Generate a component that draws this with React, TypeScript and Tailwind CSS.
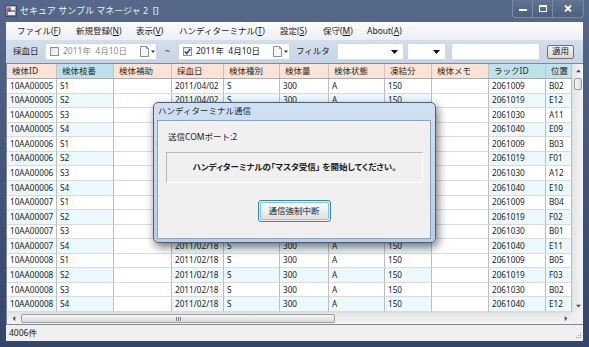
import React from 'react';

type Col = { h: string; w: string; hb: string };
const PEACH = 'bg-[#fbe4d5]';
const BLUE = 'bg-[#bde2ec]';
const cols: Col[] = [
  { h: '検体ID', w: 'w-[50px]', hb: PEACH },
  { h: '検体枝番', w: 'w-[57px]', hb: BLUE },
  { h: '検体補助', w: 'w-[58px]', hb: PEACH },
  { h: '採血日', w: 'w-[52px]', hb: PEACH },
  { h: '検体種別', w: 'w-[56px]', hb: PEACH },
  { h: '検体量', w: 'w-[49px]', hb: PEACH },
  { h: '検体状態', w: 'w-[56px]', hb: PEACH },
  { h: '凍結分', w: 'w-[47px]', hb: PEACH },
  { h: '検体メモ', w: 'w-[57px]', hb: PEACH },
  { h: 'ラックID', w: 'w-[57px]', hb: BLUE },
  { h: '位置', w: 'w-[26px]', hb: BLUE },
];

const racks = [
  ['2061009', 'B02'], ['2061019', 'E12'], ['2061030', 'A11'], ['2061040', 'E09'],
  ['2061009', 'B03'], ['2061019', 'F01'], ['2061030', 'A12'], ['2061040', 'E10'],
  ['2061009', 'B04'], ['2061019', 'F02'], ['2061030', 'B01'], ['2061040', 'E11'],
  ['2061009', 'B05'], ['2061019', 'F03'], ['2061030', 'B02'], ['2061040', 'E12'],
];

const rows = racks.map((r, i) => {
  const n = 5 + Math.floor(i / 4);
  return [
    `10AA0000${n}`,
    `S${(i % 4) + 1}`,
    '',
    n <= 6 ? '2011/04/02' : '2011/02/18',
    'S',
    '300',
    'A',
    '150',
    '',
    r[0],
    r[1],
  ];
});

function U({ c }: { c: string }) {
  return <span className="underline underline-offset-[1px]">{c}</span>;
}

function CalIcon() {
  return (
    <svg width="16" height="11" viewBox="0 0 16 11">
      <path d="M0.5 0.5 H6.5 L8.5 2.5 V10.5 H0.5 Z" fill="#f6f6f6" stroke="#8c8c8c" />
      <path d="M6.5 0.5 V2.5 H8.5" fill="none" stroke="#8c8c8c" />
      <path d="M11 4.5 H15 L13 7 Z" fill="#333" />
    </svg>
  );
}

function DownArrow() {
  return (
    <svg width="7" height="4" viewBox="0 0 7 4">
      <path d="M0 0 H7 L3.5 4 Z" fill="#111" />
    </svg>
  );
}

function Check({ checked }: { checked: boolean }) {
  return (
    <div className="w-[9px] h-[9px] border border-[#8e8f8f] bg-gradient-to-br from-[#e4e4e4] to-[#fbfbfb] flex items-center justify-center">
      {checked && (
        <svg width="7" height="7" viewBox="0 0 7 7">
          <path d="M0.8 3.6 L2.7 5.6 L6.3 1" fill="none" stroke="#2a3b63" strokeWidth="1.4" />
        </svg>
      )}
    </div>
  );
}

function DateBox({ checked }: { checked: boolean }) {
  return (
    <div className="w-[112px] h-[17px] bg-white border border-[#d2d8e0] flex items-center">
      <div className="ml-[4px]">
        <Check checked={checked} />
      </div>
      <span className={`ml-[4px] w-[75px] whitespace-pre ${checked ? 'text-[#1a1a1a]' : 'text-[#8d8d8d]'}`}>
        2011年  4月10日
      </span>
      <div className="ml-[2px]">
        <CalIcon />
      </div>
    </div>
  );
}

function Tri({ dir }: { dir: 'up' | 'down' | 'left' | 'right' }) {
  const d =
    dir === 'up' ? 'M0 4 H7 L3.5 0 Z' : dir === 'down' ? 'M0 0 H7 L3.5 4 Z' : dir === 'left' ? 'M4 0 V7 L0 3.5 Z' : 'M0 0 V7 L4 3.5 Z';
  const w = dir === 'up' || dir === 'down' ? 7 : 4;
  const h = dir === 'up' || dir === 'down' ? 4 : 7;
  return (
    <svg width={w} height={h} viewBox={`0 0 ${w} ${h}`} className="scale-75">
      <path d={d} fill="#4a4a4a" />
    </svg>
  );
}

export default function App() {
  return (
    <div className="w-[589px] h-[347px] relative overflow-hidden flex flex-col bg-gradient-to-b from-[#56698a] via-[#43567a] to-[#34476a] font-['Noto_Sans','Noto_Sans_CJK_JP',sans-serif] text-[8.5px] leading-none text-[#1b1b1b]">
      {/* Title bar */}
      <div className="h-[22px] flex items-start shrink-0">
        <div className="mt-[5px] ml-[5px] w-[12px] h-[12px] rounded-[1px] bg-gradient-to-b from-[#9fb2c8] to-[#5f7591] border border-[#3d4d63] relative overflow-hidden">
          <div className="absolute left-[1px] top-[2px] w-[4px] h-[4px] rounded-full bg-[#d23b3b]" />
          <div className="absolute right-[1px] top-[1px] w-[4px] h-[3px] bg-white" />
          <div className="absolute left-[2px] bottom-[1px] w-[7px] h-[3px] bg-[#e8eef6]" />
        </div>
        <span className="ml-[3px] mt-[6px] text-[9px] text-[#eef2f7] whitespace-pre">セキュア サンプル マネージャ 2  []</span>
        <div className="ml-auto mr-[5px] h-[18px] flex rounded-b-[4px] border border-t-0 border-[#7a8aa3] bg-gradient-to-b from-[#627593] to-[#4c5f80] overflow-hidden">
          <div className="w-[20px] flex items-center justify-center border-r border-[#7a8aa3]">
            <div className="w-[8px] h-[2px] bg-white mt-[3px]" />
          </div>
          <div className="w-[20px] flex items-center justify-center border-r border-[#7a8aa3]">
            <div className="w-[8px] h-[7px] border border-white border-t-[2px]" />
          </div>
          <div className="w-[30px] flex items-center justify-center">
            <svg width="8" height="7" viewBox="0 0 8 7">
              <path d="M1 0.5 L7 6.5 M7 0.5 L1 6.5" stroke="white" strokeWidth="1.8" />
            </svg>
          </div>
        </div>
      </div>

      {/* Client */}
      <div className="mx-[6px] w-[577px] flex flex-col bg-[#f0f0f0]">
        {/* Menu */}
        <div className="h-[18px] flex items-center pl-[11px] bg-gradient-to-b from-[#fbfcfd] to-[#eceff4] text-[#1b1b1b] whitespace-nowrap">
          <span className="w-[59px]">ファイル(<U c="F" />)</span>
          <span className="w-[60px]">新規登録(<U c="N" />)</span>
          <span className="w-[43px]">表示(<U c="V" />)</span>
          <span className="w-[101px]">ハンディターミナル(<U c="T" />)</span>
          <span className="w-[43px]">設定(<U c="S" />)</span>
          <span className="w-[44px]">保守(<U c="M" />)</span>
          <span>About(<U c="A" />)</span>
        </div>

        {/* Toolbar */}
        <div className="h-[23px] flex items-center bg-gradient-to-b from-[#d3dfed] to-[#c4d3e6] whitespace-nowrap">
          <span className="w-[39px] pl-[7px]">採血日</span>
          <DateBox checked={false} />
          <span className="w-[21px] text-center text-[#333]">~</span>
          <DateBox checked={true} />
          <span className="w-[47px] pl-[6px]">フィルタ</span>
          <div className="w-[67px] h-[17px] bg-white border border-[#d2d8e0] flex items-center justify-end pr-[5px]">
            <DownArrow />
          </div>
          <div className="ml-[3px] w-[39px] h-[17px] bg-white border border-[#d2d8e0] flex items-center justify-end pr-[5px]">
            <DownArrow />
          </div>
          <div className="ml-[5px] w-[89px] h-[17px] bg-white border border-[#d2d8e0]" />
          <div className="ml-[7px] w-[27px] h-[14px] rounded-[2px] border border-[#707070] bg-gradient-to-b from-[#f5f5f5] to-[#d9d9d9] flex items-center justify-center">
            適用
          </div>
        </div>

        {/* Grid */}
        <div className="flex flex-col border-l border-t border-b border-[#828790] bg-white text-[8.2px]">
          <div className="flex h-[248px]">
            <div className="w-[565px] flex flex-col">
              <div className="h-[15px] flex border-b border-[#a5acb5] text-[8.5px]">
                {cols.map((c, i) => (
                  <div
                    key={i}
                    className={`${c.w} ${c.hb} h-full border-r border-[#c8c3c0] flex items-center pl-[5px] text-[#2a2a2a] whitespace-nowrap overflow-hidden`}
                  >
                    {c.h}
                  </div>
                ))}
              </div>
              {rows.map((r, ri) => (
                <div key={ri} className="h-[14.5625px] flex">
                  {r.map((v, ci) => (
                    <div
                      key={ci}
                      className={`${cols[ci].w} h-full border-r border-b border-r-[#bdbdbd] border-b-[#dadada] flex items-center pl-[3px] whitespace-nowrap overflow-hidden ${
                        v === '' ? 'bg-white' : ri % 2 === 1 ? 'bg-[#ebf9fc]' : 'bg-white'
                      }`}
                    >
                      {v}
                    </div>
                  ))}
                </div>
              ))}
            </div>
            {/* vertical scrollbar */}
            <div className="w-[11px] flex flex-col bg-gradient-to-r from-[#e6e6e6] to-[#f4f4f4] border-l border-[#e0e0e0]">
              <div className="h-[13px] flex items-center justify-center">
                <Tri dir="up" />
              </div>
              <div className="mt-[1px] h-[12px] mx-[1px] rounded-[2px] border border-[#9b9b9b] bg-gradient-to-r from-[#f5f5f5] to-[#dedede]" />
              <div className="flex-1" />
              <div className="h-[13px] flex items-center justify-center">
                <Tri dir="down" />
              </div>
            </div>
          </div>
          {/* horizontal scrollbar */}
          <div className="flex h-[12px]">
            <div className="w-[565px] flex bg-gradient-to-b from-[#e6e6e6] to-[#f4f4f4] border-t border-[#e0e0e0]">
              <div className="w-[13px] flex items-center justify-center">
                <Tri dir="left" />
              </div>
              <div className="ml-[1px] my-[1px] w-[314px] rounded-[2px] border border-[#9b9b9b] bg-gradient-to-b from-[#f7f7f7] to-[#d9d9d9] flex items-center justify-center gap-[1px]">
                <div className="w-[1px] h-[4px] bg-[#7a7a7a]" />
                <div className="w-[1px] h-[4px] bg-[#7a7a7a]" />
                <div className="w-[1px] h-[4px] bg-[#7a7a7a]" />
              </div>
              <div className="flex-1" />
              <div className="w-[13px] flex items-center justify-center">
                <Tri dir="right" />
              </div>
            </div>
            <div className="w-[11px] bg-[#f0f0f0]" />
          </div>
        </div>

        {/* Status bar */}
        <div className="h-[16px] flex items-center pl-[3px] bg-[#f0f0f0] relative">
          <span>4006件</span>
          <div className="ml-auto mr-[2px] mt-[4px] grid grid-cols-3 gap-[1px]">
            <div className="w-[1px] h-[1px]" />
            <div className="w-[1px] h-[1px]" />
            <div className="w-[1px] h-[1px] bg-[#9a9a9a]" />
            <div className="w-[1px] h-[1px]" />
            <div className="w-[1px] h-[1px] bg-[#9a9a9a]" />
            <div className="w-[1px] h-[1px] bg-[#9a9a9a]" />
            <div className="w-[1px] h-[1px] bg-[#9a9a9a]" />
            <div className="w-[1px] h-[1px] bg-[#9a9a9a]" />
            <div className="w-[1px] h-[1px] bg-[#9a9a9a]" />
          </div>
        </div>
      </div>

      {/* Modal dialog */}
      <div className="absolute left-[153px] top-[102px] w-[283px] h-[141px] rounded-[5px] border border-[#4f5f76] bg-gradient-to-b from-[#cfe0f2] via-[#c3d7ed] to-[#b7cce6] shadow-[2px_4px_10px_rgba(0,0,0,0.55)] flex flex-col">
        <div className="h-[17px] flex items-center pl-[4px] text-[8.5px] text-[#1e2a3a]">ハンディターミナル通信</div>
        <div className="ml-[3px] w-[274px] h-[119px] border border-[#8da2bb] bg-[#f0f0f0] flex flex-col">
          <div className="mt-[11px] ml-[10px] h-[11px] flex items-center">送信COMポート:2</div>
          <div className="mt-[9px] ml-[8px] w-[257px] h-[31px] border border-[#b9b9b9] border-b-white border-r-white flex items-center justify-center font-bold [font-feature-settings:'palt']">
            ハンディターミナルの「マスタ受信」 を開始してください。
          </div>
          <div className="mt-[17px] self-center w-[73px] h-[22px] rounded-[3px] border border-[#3c7fb1] p-[1px]">
            <div className="w-full h-full rounded-[2px] border border-[#7ec4ea] bg-gradient-to-b from-[#fafafa] to-[#e1e1e1] flex items-center justify-center">
              通信強制中断
            </div>
          </div>
        </div>
      </div>
    </div>
  );
}
